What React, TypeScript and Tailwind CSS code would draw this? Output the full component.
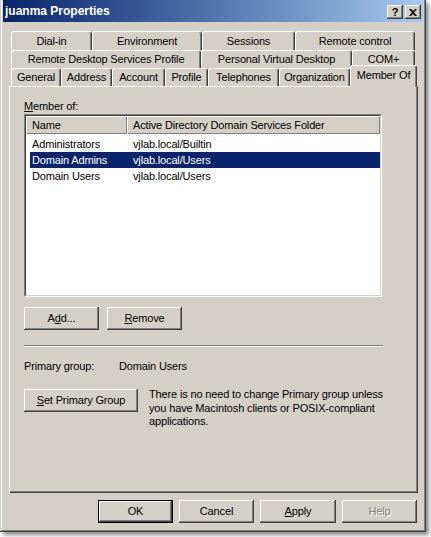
import React from 'react'

const raised = 'shadow-[inset_-1px_-1px_#404040,inset_1px_1px_#ffffff,inset_-2px_-2px_#808080,inset_2px_2px_#d4d0c8]'

const row1 = [
    { label: 'Dial-in', w: 'w-[81px]' },
    { label: 'Environment', w: 'w-[110px]' },
    { label: 'Sessions', w: 'w-[93px]' },
    { label: 'Remote control', w: 'w-[120px]' },
]
const row2 = [
    { label: 'Remote Desktop Services Profile', w: 'w-[190px]' },
    { label: 'Personal Virtual Desktop', w: 'w-[151px]' },
    { label: 'COM+', w: 'w-[63px]' },
]
const row3 = [
    { label: 'General', w: 'w-[50px]' },
    { label: 'Address', w: 'w-[51px]' },
    { label: 'Account', w: 'w-[53px]' },
    { label: 'Profile', w: 'w-[43px]' },
    { label: 'Telephones', w: 'w-[71px]' },
    { label: 'Organization', w: 'w-[71px]' },
]

const groups = [
    { name: 'Administrators', folder: 'vjlab.local/Builtin', selected: false },
    { name: 'Domain Admins', folder: 'vjlab.local/Users', selected: true },
    { name: 'Domain Users', folder: 'vjlab.local/Users', selected: false },
]

const Tab = ({ label, w, h }: { label: string; w: string; h: string }) => (
    <div className={`${w} ${h} shrink-0 flex items-center justify-center bg-[#d4d0c8] border-t border-l border-white border-r border-r-[#404040] rounded-t-[3px] shadow-[inset_-1px_0_#808080]`}>
        <span>{label}</span>
    </div>
)

const Button = ({ children, w, extra = '' }: { children: React.ReactNode; w: string; extra?: string }) => (
    <button className={`${w} h-[23px] flex items-center justify-center bg-[#d4d0c8] ${raised} ${extra}`}>
        {children}
    </button>
)

const App = () => {
    return (
        <div className="w-[431px] h-[537px] bg-white font-['Liberation_Sans',Arial,sans-serif] text-[11px] leading-[13px] tracking-[-0.15px] text-black">
            <div className="w-[426px] h-[532px] flex flex-col px-[3px] bg-[#d4d0c8] shadow-[inset_-1px_-1px_#404040,inset_1px_0_#d4d0c8,inset_-2px_-2px_#808080,inset_2px_0_#ffffff,3px_3px_4px_rgba(0,0,0,0.45)]">
                {/* title bar */}
                <div className="h-[22px] flex items-center justify-between pl-[2px] pr-[2px] bg-linear-to-r from-[#0a246a] to-[#a6caf0]">
                    <span className="text-white font-bold text-[12px] tracking-normal">juanma Properties</span>
                    <div className="flex gap-x-[2px] mt-[2px]">
                        <div className={`w-[16px] h-[14px] flex items-center justify-center bg-[#d4d0c8] font-bold text-[11px] ${raised}`}>?</div>
                        <div className={`w-[16px] h-[14px] flex items-center justify-center bg-[#d4d0c8] ${raised}`}>
                            <svg width="8" height="7" viewBox="0 0 8 7">
                                <path d="M0 0h2l2 2 2-2h2L5 3.5 8 7H6L4 5 2 7H0l3-3.5z" fill="#000" />
                            </svg>
                        </div>
                    </div>
                </div>

                <div className="flex flex-col pl-[6px] pt-[9px]">
                    {/* tabs */}
                    <div className="flex flex-col ml-[2px]">
                        <div className="flex h-[19px]">
                            {row1.map((t) => <Tab key={t.label} label={t.label} w={t.w} h="h-[19px]" />)}
                        </div>
                        <div className="flex h-[18px]">
                            {row2.map((t) => <Tab key={t.label} label={t.label} w={t.w} h="h-[18px]" />)}
                        </div>
                        <div className="flex h-[18px] items-end">
                            {row3.map((t) => <Tab key={t.label} label={t.label} w={t.w} h="h-[18px]" />)}
                            <div className="relative z-10 w-[67px] h-[22px] -mb-px shrink-0 flex items-center justify-center pb-[3px] bg-[#d4d0c8] border-t border-l border-white border-r border-r-[#404040] rounded-t-[3px] shadow-[inset_-1px_0_#808080]">
                                <span>Member Of</span>
                            </div>
                        </div>
                    </div>

                    {/* panel */}
                    <div className="w-[409px] h-[407px] flex flex-col pl-[15px] pt-[14px] shadow-[inset_1px_1px_#ffffff,inset_-1px_-1px_#404040,inset_-2px_-2px_#808080]">
                        <span><u>M</u>ember of:</span>

                        <div className="mt-px w-[358px] h-[183px] border border-t-[#808080] border-l-[#808080] border-b-white border-r-white">
                            <div className="w-full h-full flex flex-col bg-white border border-t-[#404040] border-l-[#404040] border-b-[#d4d0c8] border-r-[#d4d0c8]">
                                <div className="flex h-[18px] shrink-0 bg-[#d4d0c8]">
                                    <div className="w-[101px] flex items-center pl-[6px] shadow-[inset_1px_1px_#ffffff,inset_-1px_-1px_#808080]">Name</div>
                                    <div className="flex-1 flex items-center pl-[6px] shadow-[inset_1px_1px_#ffffff,inset_-1px_-1px_#808080]">Active Directory Domain Services Folder</div>
                                </div>
                                <div className="flex flex-col mt-[2px] pl-[4px]">
                                    {groups.map((g) => (
                                        <div key={g.name} className={`flex h-[16px] items-center ${g.selected ? 'bg-[#0a246a] text-white' : ''}`}>
                                            <span className="w-[97px] pl-[2px]">{g.name}</span>
                                            <span className="pl-[6px]">{g.folder}</span>
                                        </div>
                                    ))}
                                </div>
                            </div>
                        </div>

                        <div className="flex gap-x-[8px] mt-[10px]">
                            <Button w="w-[75px]">A<u>d</u>d...</Button>
                            <Button w="w-[75px]"><u>R</u>emove</Button>
                        </div>

                        <div className="mt-[15px] w-[359px] border-t border-t-[#808080] border-b border-b-white"></div>

                        <div className="flex mt-[13px]">
                            <span className="w-[95px]">Primary group:</span>
                            <span>Domain Users</span>
                        </div>

                        <div className="flex mt-[16px] gap-x-[11px] items-start">
                            <Button w="w-[114px]" extra="shrink-0"><u>S</u>et Primary Group</Button>
                            <p className="-mt-px leading-[13.5px]">
                                There is no need to change Primary group unless<br />
                                you have Macintosh clients or POSIX-compliant<br />
                                applications.
                            </p>
                        </div>
                    </div>

                    {/* dialog buttons */}
                    <div className="w-[409px] flex justify-end gap-x-[6px] pr-px mt-[7px]">
                        <Button w="w-[75px]" extra="border border-black">OK</Button>
                        <Button w="w-[75px]">Cancel</Button>
                        <Button w="w-[76px]"><u>A</u>pply</Button>
                        <Button w="w-[75px]" extra="text-[#808080] [text-shadow:1px_1px_0_#ffffff]">Help</Button>
                    </div>
                </div>
            </div>
        </div>
    )
}

export default App
